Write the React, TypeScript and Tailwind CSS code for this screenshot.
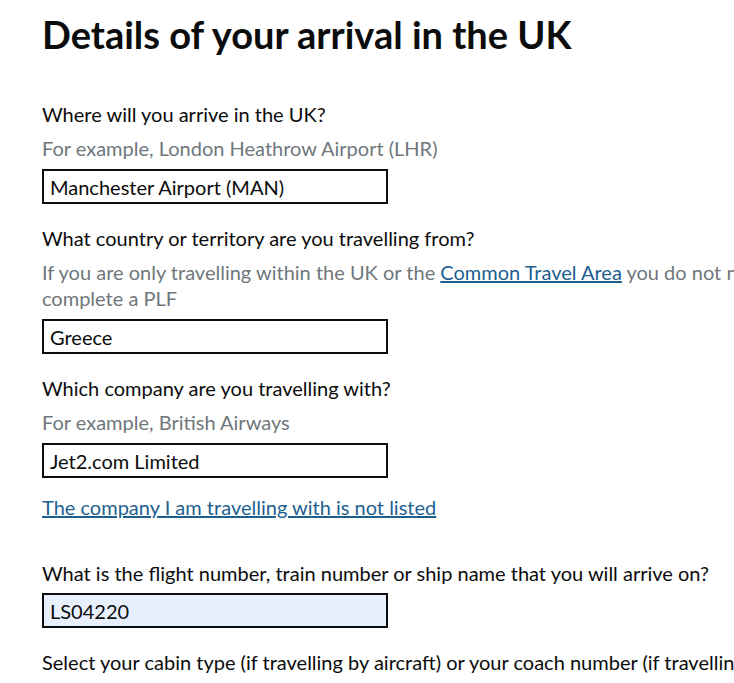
import React from "react";

const font = { fontFamily: "Lato, 'Noto Sans', Arial, sans-serif" };

function Field({
  label,
  hint,
  value,
  autofill,
}: {
  label: string;
  hint?: React.ReactNode;
  value: string;
  autofill?: boolean;
}) {
  return (
    <div className="mb-[22px]">
      <label className="block text-[20px] leading-[25px] text-[#0b0c0c]">{label}</label>
      {hint && <div className="mt-[8px] text-[20px] leading-[26px] text-[#6f777b]">{hint}</div>}
      <input
        readOnly
        value={value}
        className={`block h-[35px] w-[346px] border-2 border-[#0b0c0c] px-[6px] text-[20px] text-[#0b0c0c] outline-none ${
          hint ? "mt-[8px]" : "mt-[7px]"
        } ${autofill ? "bg-[#e8f0fe]" : "bg-white"}`}
        style={font}
      />
    </div>
  );
}

export default function App() {
  return (
    <div className="h-[683px] w-[734px] overflow-hidden bg-white" style={font}>
      <div className="w-[900px] pl-[42px] pt-[12px]">
        <h1 className="mb-[46px] text-[38px] font-bold leading-[44px] text-[#0b0c0c]">
          Details of your arrival in the UK
        </h1>

        <Field
          label="Where will you arrive in the UK?"
          hint="For example, London Heathrow Airport (LHR)"
          value="Manchester Airport (MAN)"
        />
        <Field
          label="What country or territory are you travelling from?"
          hint={
            <div className="w-[800px]">
              If you are only travelling within the UK or the{" "}
              <a href="#" className="text-[#1d5f8f] underline">
                Common Travel Area
              </a>{" "}
              you do not need to complete a PLF
            </div>
          }
          value="Greece"
        />
        <div className="mb-[40px]">
          <label className="block text-[20px] leading-[25px] text-[#0b0c0c]">
            Which company are you travelling with?
          </label>
          <div className="mt-[8px] text-[20px] leading-[26px] text-[#6f777b]">For example, British Airways</div>
          <input
            readOnly
            value="Jet2.com Limited"
            className="mt-[8px] block h-[35px] w-[346px] border-2 border-[#0b0c0c] bg-white px-[6px] text-[20px] text-[#0b0c0c] outline-none"
            style={font}
          />
          <a href="#" className="mt-[17px] inline-block text-[20px] leading-[25px] text-[#1d5f8f] underline">
            The company I am travelling with is not listed
          </a>
        </div>

        <Field
          label="What is the flight number, train number or ship name that you will arrive on?"
          value="LS04220"
          autofill
        />
        <label className="block whitespace-nowrap text-[20px] leading-[25px] text-[#0b0c0c]">
          Select your cabin type (if travelling by aircraft) or your coach number (if travelling by train)
        </label>
      </div>
    </div>
  );
}
